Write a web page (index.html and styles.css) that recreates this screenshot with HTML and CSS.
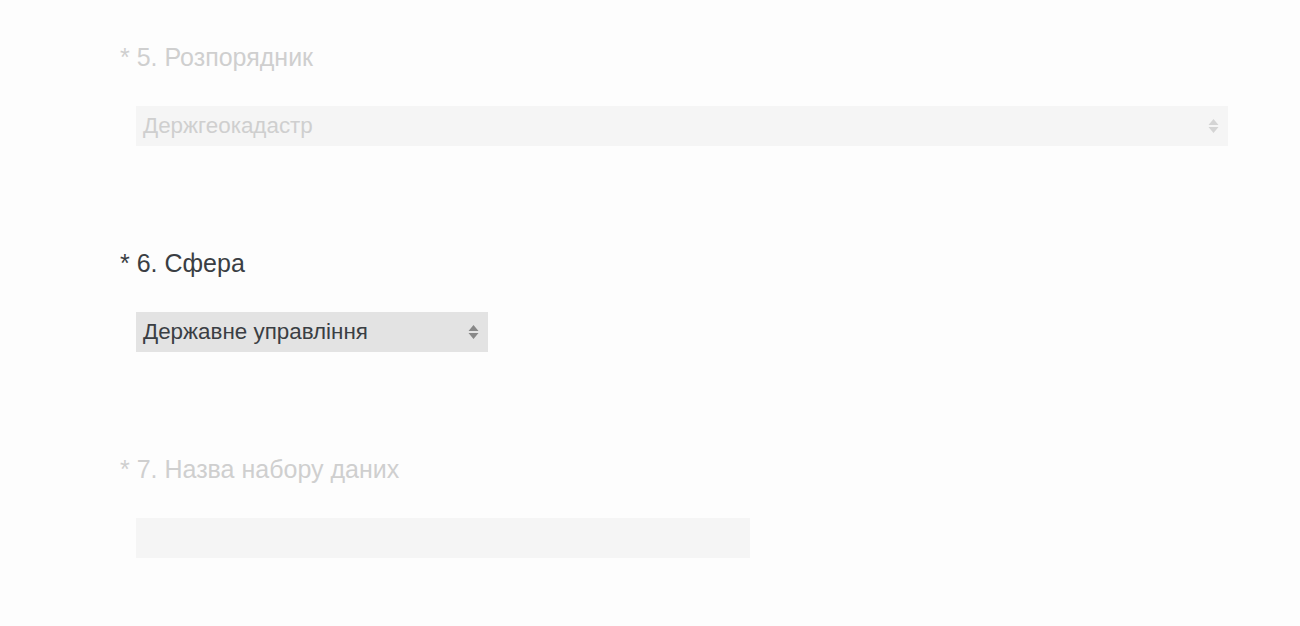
FILE: index.html
```html
<!DOCTYPE html>
<html lang="uk">
<head>
    <meta charset="UTF-8">
    <title>Набір даних</title>
    <link rel="stylesheet" href="styles.css">
</head>
<body>
    <form class="form">
        <div class="field field--disabled">
            <label class="field-label">* 5. Розпорядник</label>
            <div class="select select--wide">
                <span>Держгеокадастр</span>
                <svg class="arrows" width="11" height="16" viewBox="0 0 11 16"><path d="M5.5 1 L10.5 7 H0.5 Z M0.5 9 H10.5 L5.5 15 Z"/></svg>
            </div>
        </div>
        <div class="field">
            <label class="field-label">* 6. Сфера</label>
            <div class="select select--small">
                <span>Державне управління</span>
                <svg class="arrows" width="11" height="16" viewBox="0 0 11 16"><path d="M5.5 1 L10.5 7 H0.5 Z M0.5 9 H10.5 L5.5 15 Z"/></svg>
            </div>
        </div>
        <div class="field field--disabled">
            <label class="field-label">* 7. Назва набору даних</label>
            <div class="input"></div>
        </div>
    </form>
</body>
</html>
```

FILE: styles.css
```css
body {
    margin: 0;
    background: #fdfdfd;
    font-family: "Liberation Sans", Arial, sans-serif;
    color: #3a3e43;
}
.form {
    padding: 44px 0 0 120px;
}
.field {
    height: 206px;
}
.field:last-child {
    height: auto;
}
.field-label {
    display: block;
    font-size: 25px;
    line-height: 27px;
    margin-bottom: 35px;
}
.select,
.input {
    margin-left: 16px;
    height: 40px;
    background: #e3e3e3;
    box-sizing: border-box;
}
.select {
    display: flex;
    align-items: center;
    justify-content: space-between;
    padding: 0 9px 0 7px;
    font-size: 22.4px;
}
.select--wide {
    width: 1092px;
}
.select--small {
    width: 352px;
}
.input {
    width: 614px;
}
.arrows {
    fill: #888;
}
.field--disabled .field-label,
.field--disabled .select {
    color: #cfcfcf;
}
.field--disabled .select,
.field--disabled .input {
    background: #f5f5f5;
}
.field--disabled .arrows {
    fill: #d4d4d4;
}
```
